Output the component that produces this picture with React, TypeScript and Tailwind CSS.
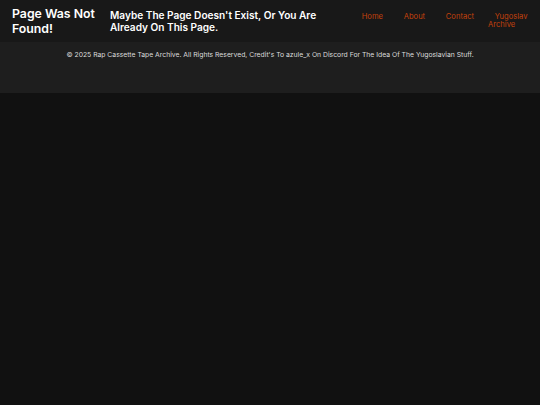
export default function App() {
  return (
    <div className="min-h-[405px] bg-[#111111] font-[family-name:Inter,sans-serif]">
      <header className="flex h-[42px] items-center bg-[#181818] pl-3 pr-[14px] shadow-md">
        <h1 className="w-[98px] shrink-0 text-[12.3px] font-semibold leading-[15px] text-white">
          Page Was Not Found!
        </h1>
        <h2 className="w-[225px] shrink-0 text-[10.1px] font-semibold leading-[12.5px] text-white">
          Maybe The Page Doesn't Exist, Or You Are Already On This Page.
        </h2>
        <nav className="ml-auto flex gap-[14px] self-start pt-[12.5px] text-[7.6px] leading-[8.7px] text-[#c2410c]">
          <div>
            <a className="pl-[6.7px]">Home</a>
          </div>
          <div>
            <a className="pl-[6.7px]">About</a>
          </div>
          <div>
            <a className="pl-[6.7px]">Contact</a>
          </div>
          <div className="w-[38px]">
            <a className="pl-[6.7px]">Yugoslav Archive</a>
          </div>
        </nav>
      </header>
      <footer className="h-[51px] bg-[#1e1e1e] pt-[8px] text-center text-[6.8px] text-[#dcdcdc]">
        © 2025 Rap Cassette Tape Archive. All Rights Reserved, Credit's To azule_x On Discord For The Idea Of The Yugoslavian Stuff.
      </footer>
    </div>
  )
}
